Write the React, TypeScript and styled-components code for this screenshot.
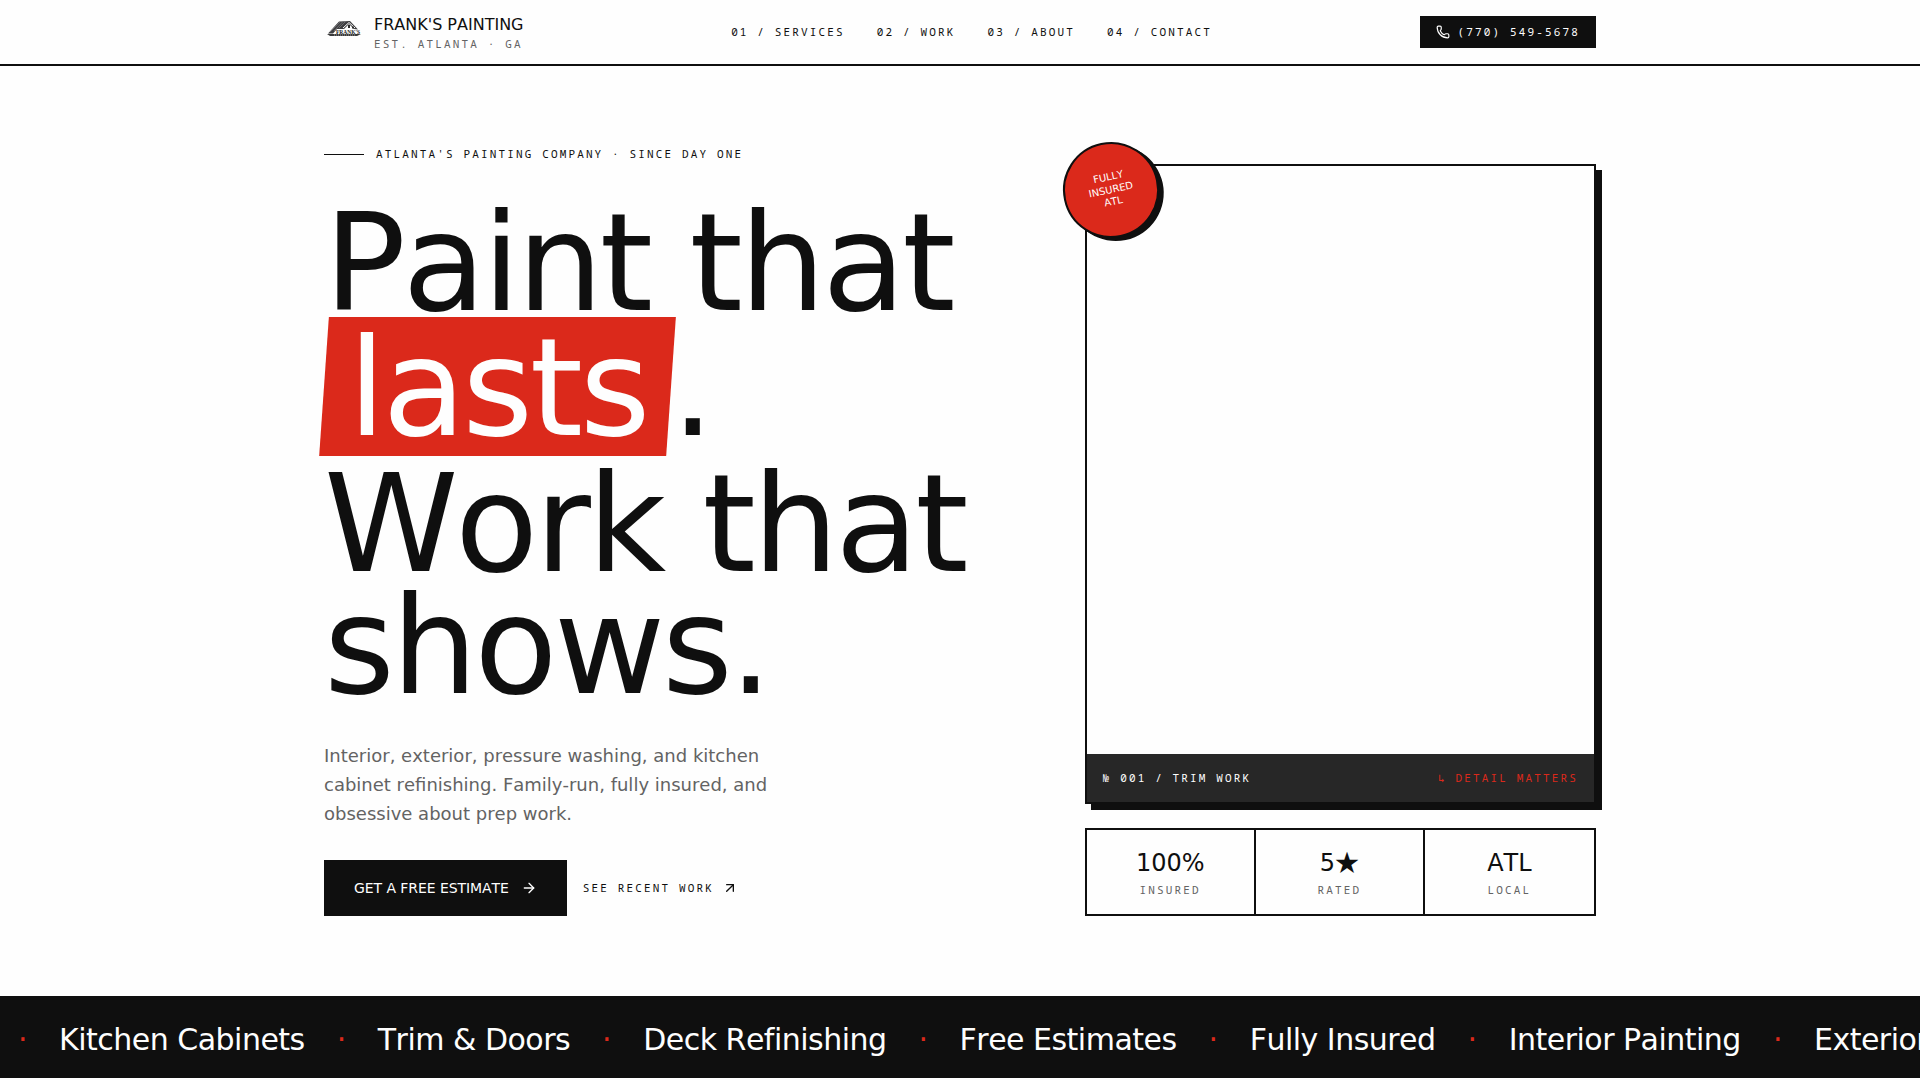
import React from "react";
import styled, { createGlobalStyle } from "styled-components";
import { ArrowRight, ArrowUpRight, Phone } from "lucide-react";

const ink = "#0f0f0f";
const paper = "#fefefe";
const red = "#db291b";
const muted = "#636363";
const sans = `Verdana, "DejaVu Sans", sans-serif`;
const mono = `"Andale Mono", "Noto Sans Mono", "DejaVu Sans Mono", monospace`;

const GlobalStyle = createGlobalStyle`
  *, *::before, *::after { box-sizing: border-box; }
  body {
    margin: 0;
    background: ${paper};
    color: ${ink};
    font-family: ${sans};
    font-kerning: none;
    overflow-x: hidden;
  }
  h1, p, dl, dd, dt, figure, ul { margin: 0; padding: 0; }
  a { color: inherit; text-decoration: none; }
`;

const Label = styled.span<{ $color?: string }>`
  font-family: ${mono};
  font-size: 11px;
  line-height: 16px;
  letter-spacing: 0.195em;
  text-transform: uppercase;
  white-space: nowrap;
  color: ${(p) => p.$color ?? "inherit"};
`;

const Container = styled.div`
  width: 100%;
  max-width: 1320px;
  margin: 0 auto;
  padding: 0 24px;
`;

const Header = styled.header`
  border-bottom: 2px solid ${ink};
`;

const HeaderRow = styled(Container)`
  display: flex;
  align-items: center;
  justify-content: space-between;
  height: 64px;
`;

const Brand = styled.a`
  display: flex;
  align-items: center;
  gap: 10px;
`;

const BrandText = styled.span`
  display: flex;
  flex-direction: column;
  padding-top: 2px;
`;

const BrandName = styled.span`
  font-size: 16px;
  line-height: 22px;
`;

const Nav = styled.nav`
  display: flex;
  gap: 32px;
`;

const PhoneLink = styled.a`
  display: flex;
  align-items: center;
  gap: 8px;
  padding: 8px 16px;
  background: ${ink};
  color: ${paper};
`;

const Hero = styled(Container)`
  display: grid;
  grid-template-columns: repeat(12, minmax(0, 1fr));
  gap: 32px;
  align-items: end;
  padding-top: 80px;
  padding-bottom: 80px;
`;

const Intro = styled.div`
  grid-column: span 7;
`;

const Eyebrow = styled.p`
  display: flex;
  align-items: center;
  gap: 12px;
  margin-bottom: 40px;
  line-height: 16px;

  &::before {
    content: "";
    width: 40px;
    height: 1px;
    background: ${ink};
  }
`;

const Title = styled.h1`
  font-size: 136px;
  font-weight: 400;
  line-height: 0.9;
  letter-spacing: -0.025em;
`;

const Highlight = styled.span`
  position: relative;
  z-index: 0;
  display: inline-block;
  margin: -7px 0 6px;
  padding: 10px 24px 7px;
  color: ${paper};

  &::before {
    content: "";
    position: absolute;
    inset: 0;
    z-index: -1;
    background: ${red};
    transform: skewX(-4deg);
  }
`;

const Lead = styled.p`
  max-width: 480px;
  margin: 33px 0 32px;
  font-size: 18px;
  line-height: 29px;
  color: ${muted};
`;

const Actions = styled.div`
  display: flex;
  align-items: center;
  gap: 16px;
`;

const PrimaryLink = styled.a`
  display: flex;
  align-items: center;
  gap: 12px;
  padding: 16px 28px;
  border: 2px solid ${ink};
  background: ${ink};
  color: ${paper};
  font-size: 14px;
  line-height: 20px;
  letter-spacing: -0.005em;
`;

const TextLink = styled.a`
  display: flex;
  align-items: center;
  gap: 8px;
`;

const Showcase = styled.div`
  grid-column: span 5;
  display: grid;
  gap: 24px;
`;

const Frame = styled.figure`
  position: relative;
  display: flex;
  flex-direction: column;
  justify-content: flex-end;
  aspect-ratio: 4 / 5;
  border: 2px solid ${ink};
  box-shadow: 6px 6px 0 ${ink};
`;

const Caption = styled.figcaption`
  display: flex;
  justify-content: space-between;
  padding: 16px;
  background: #272727;
  color: ${paper};
`;

const Badge = styled.div`
  position: absolute;
  top: -24px;
  left: -24px;
  display: grid;
  place-items: center;
  width: 96px;
  height: 96px;
  border: 2px solid ${ink};
  border-radius: 50%;
  background: ${red};
  box-shadow: 4px 4px 0 ${ink};
  color: ${paper};
  font-size: 10px;
  line-height: 1.25;
  text-align: center;
  transform: rotate(-12deg);
`;

const Stats = styled.dl`
  display: grid;
  grid-template-columns: repeat(3, 1fr);
  border: 2px solid ${ink};
`;

const Stat = styled.div`
  display: flex;
  flex-direction: column-reverse;
  align-items: center;
  gap: 2px;
  padding: 16px;

  &:not(:last-child) {
    border-right: 2px solid ${ink};
  }
`;

const StatValue = styled.dd`
  font-size: 24px;
  line-height: 34px;
`;

const Star = styled.span`
  font-family: "Noto Sans CJK JP", sans-serif;
  line-height: 1;
`;

const StatName = styled.dt`
  display: flex;
`;

const Marquee = styled.div`
  overflow: hidden;
  padding: 26px 0 20px;
  background: ${ink};
  color: ${paper};
`;

const Track = styled.ul`
  display: flex;
  width: max-content;
  padding-left: 18px;
  list-style: none;
  font-size: 30px;
  line-height: 36px;
  letter-spacing: -0.017em;
  white-space: nowrap;
`;

const Service = styled.li`
  display: flex;
  gap: 32px;
  padding-right: 32px;

  &::before {
    content: "·";
    color: ${red};
  }
`;

function Logo() {
  return (
    <svg width="40" height="40" viewBox="0 0 40 40" role="img" aria-label="Frank's Painting logo">
      <path d="M4 21.5 L15 9.5 L26 9 L34 17.5 L30 17 L25 12 L20 17 L13 17 L9 21.5 Z" fill="#3f3f41" />
      <path d="M6 20 L16 10 M10 19 L19 9.5 M15 16 L22 9" stroke="#6c6c70" strokeWidth="1" />
      <path d="M19 16 L25 10.5 L31 16" fill="none" stroke="#fefefe" strokeWidth="1" />
      <path d="M24 13 h2 v3 h-2z M28 14.5 h2 v2 h-2z" fill="#2a2a2a" />
      <text
        x="12"
        y="21.5"
        fontSize="5.5"
        fontWeight="700"
        fontFamily="Liberation Serif, serif"
        fill="#1c1c1c"
      >
        FRANK'S
      </text>
      <path d="M3 22 H37 L33 24 H6 Z" fill="#3a3a3a" />
      <path d="M10 23 H31" stroke="#9d9d9d" strokeWidth="1" strokeDasharray="1 1" />
    </svg>
  );
}

const navItems = [
  ["01 / Services", "#services"],
  ["02 / Work", "#work"],
  ["03 / About", "#about"],
  ["04 / Contact", "#contact"],
];

const stats = [
  { value: "100%", name: "Insured" },
  {
    value: (
      <>
        5<Star>★</Star>
      </>
    ),
    name: "Rated",
  },
  { value: "ATL", name: "Local" },
];

const services = [
  "Kitchen Cabinets",
  "Trim & Doors",
  "Deck Refinishing",
  "Free Estimates",
  "Fully Insured",
  "Interior Painting",
  "Exterior Painting",
];

export default function App() {
  return (
    <>
      <GlobalStyle />
      <Header>
        <HeaderRow>
          <Brand href="#top">
            <Logo />
            <BrandText>
              <BrandName>FRANK'S PAINTING</BrandName>
              <Label $color={muted}>Est. Atlanta · GA</Label>
            </BrandText>
          </Brand>
          <Nav aria-label="Main">
            {navItems.map(([text, href]) => (
              <Label as="a" key={href} href={href}>
                {text}
              </Label>
            ))}
          </Nav>
          <PhoneLink href="tel:+17705495678">
            <Phone size={14} />
            <Label>(770) 549-5678</Label>
          </PhoneLink>
        </HeaderRow>
      </Header>
      <main id="top">
        <Hero>
          <Intro>
            <Eyebrow>
              <Label>Atlanta's painting company · Since day one</Label>
            </Eyebrow>
            <Title>
              Paint that
              <br />
              <Highlight>lasts</Highlight>.
              <br />
              Work that
              <br />
              shows.
            </Title>
            <Lead>
              Interior, exterior, pressure washing, and kitchen cabinet refinishing. Family-run, fully insured, and
              obsessive about prep work.
            </Lead>
            <Actions>
              <PrimaryLink href="#contact">
                GET A FREE ESTIMATE
                <ArrowRight size={16} />
              </PrimaryLink>
              <TextLink href="#work">
                <Label>See recent work</Label>
                <ArrowUpRight size={16} />
              </TextLink>
            </Actions>
          </Intro>
          <Showcase>
            <Frame>
              <Caption>
                <Label>№ 001 / Trim work</Label>
                <Label $color={red}>↳ Detail matters</Label>
              </Caption>
              <Badge>
                <span>
                  FULLY
                  <br />
                  INSURED
                  <br />
                  ATL
                </span>
              </Badge>
            </Frame>
            <Stats>
              {stats.map(({ value, name }) => (
                <Stat key={name}>
                  <StatName>
                    <Label $color={muted}>{name}</Label>
                  </StatName>
                  <StatValue>{value}</StatValue>
                </Stat>
              ))}
            </Stats>
          </Showcase>
        </Hero>
        <Marquee>
          <Track>
            {services.map((service) => (
              <Service key={service}>{service}</Service>
            ))}
          </Track>
        </Marquee>
      </main>
    </>
  );
}
